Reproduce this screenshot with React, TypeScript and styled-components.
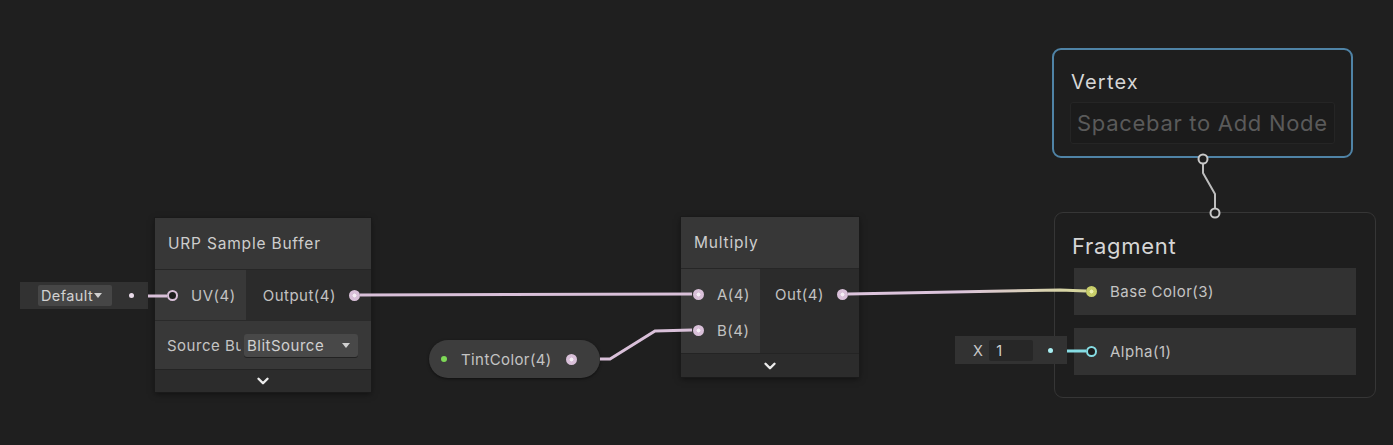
import React from "react";
import styled, { createGlobalStyle } from "styled-components";
import { ChevronDown } from "lucide-react";

const GlobalStyle = createGlobalStyle`
  html, body { margin: 0; padding: 0; background: #1f1f1f; }
  * { box-sizing: border-box; }
`;

const Canvas = styled.div`
  position: relative;
  width: 1393px;
  height: 445px;
  overflow: hidden;
  background: #1f1f1f;
  font-family: Inter, "Noto Sans", sans-serif;
  color: #c4c4c4;
`;

const WireLayer = styled.svg`
  position: absolute;
  left: 0;
  top: 0;
  width: 1393px;
  height: 445px;
  pointer-events: none;
  z-index: 2;
`;

const Placed = styled.div<{ $x: number; $y: number; $w: number }>`
  position: absolute;
  left: ${(p) => p.$x}px;
  top: ${(p) => p.$y}px;
  width: ${(p) => p.$w}px;
`;

const Node = styled(Placed)`
  display: flex;
  flex-direction: column;
  background: #2b2b2b;
  box-shadow: 0 0 0 1px #1a1a1a, 0 2px 6px rgba(0, 0, 0, 0.5);
`;

const NodeHeader = styled.div`
  height: 52px;
  display: flex;
  align-items: center;
  padding-left: 13px;
  background: #373737;
  border-bottom: 1px solid #262626;
  font-size: 15.5px;
  color: #cdcdcd;
  letter-spacing: 0.8px;
`;

const PortsRow = styled.div<{ $h: number }>`
  display: flex;
  height: ${(p) => p.$h}px;
`;

const InputsCol = styled.div<{ $w: number; $top?: number }>`
  width: ${(p) => p.$w}px;
  background: #383838;
  display: flex;
  flex-direction: column;
  justify-content: ${(p) => (p.$top ? "flex-start" : "center")};
  gap: 12px;
  padding-left: 12px;
  padding-top: ${(p) => p.$top ?? 0}px;
`;

const OutputsCol = styled.div<{ $top?: number }>`
  flex: 1;
  display: flex;
  flex-direction: column;
  justify-content: ${(p) => (p.$top ? "flex-start" : "center")};
  align-items: flex-end;
  padding-right: 11px;
  padding-top: ${(p) => p.$top ?? 0}px;
`;

const PortItem = styled.div<{ $reverse?: boolean }>`
  display: flex;
  flex-direction: ${(p) => (p.$reverse ? "row-reverse" : "row")};
  align-items: center;
  gap: 13px;
  height: 24px;
  font-size: 15px;
  letter-spacing: 0.5px;
  color: #c2c2c2;
  white-space: nowrap;
`;

const Port = styled.span<{ $c: string; $filled?: boolean; $core?: string }>`
  flex: none;
  width: 11px;
  height: 11px;
  border-radius: 50%;
  border: 2px solid ${(p) => p.$c};
  background: ${(p) =>
    p.$filled
      ? `radial-gradient(circle, ${p.$core ?? "#f3e8f3"} 0 1.8px, ${p.$c} 2.2px)`
      : "#1d1d1d"};
`;

const FieldRow = styled.div`
  height: 49px;
  display: flex;
  align-items: center;
  padding-left: 12px;
  gap: 3px;
  background: #383838;
  border-top: 1px solid #2a2a2a;
  font-size: 15px;
  letter-spacing: 0.5px;
  color: #c4c4c4;
  white-space: nowrap;
  overflow: hidden;
`;

const FieldLabel = styled.span<{ $w: number }>`
  width: ${(p) => p.$w}px;
  overflow: hidden;
  flex: none;
`;

const Dropdown = styled.div<{ $w: number }>`
  width: ${(p) => p.$w}px;
  height: 23px;
  display: flex;
  align-items: center;
  justify-content: space-between;
  padding: 0 8px 0 3px;
  background: #484848;
  border-radius: 3px;
  box-shadow: 0 1px 0 #222;
  color: #d0d0d0;
`;

const Caret = styled.span`
  flex: none;
  width: 0;
  height: 0;
  border-left: 4px solid transparent;
  border-right: 4px solid transparent;
  border-top: 5px solid #d0d0d0;
`;

const CollapseBar = styled.div<{ $h: number }>`
  height: ${(p) => p.$h}px;
  display: flex;
  align-items: center;
  justify-content: center;
  background: #2c2c2c;
  border-top: 1px solid #242424;
  color: #ececec;
`;

const InlineInput = styled(Placed)<{ $h: number }>`
  height: ${(p) => p.$h}px;
  display: flex;
  align-items: center;
  background: #323232;
  padding-left: 18px;
  padding-right: 14px;
  gap: 6px;
  font-size: 14.5px;
  letter-spacing: 0.4px;
  color: #c8c8c8;
`;

const InlineBox = styled.div<{ $w: number }>`
  width: ${(p) => p.$w}px;
  height: 21px;
  display: flex;
  align-items: center;
  padding-left: 3px;
  gap: 1px;
  background: #464646;
  border-radius: 2px;
  color: #d2d2d2;
`;

const DarkBox = styled(InlineBox)`
  background: #272727;
  padding-left: 7px;
`;

const Spacer = styled.div`
  flex: 1;
`;

const Dot = styled.span<{ $c: string }>`
  width: 5px;
  height: 5px;
  border-radius: 50%;
  background: ${(p) => p.$c};
`;

const Pill = styled(Placed)`
  height: 38px;
  border-radius: 19px;
  background: #3d3d3d;
  display: flex;
  align-items: center;
  padding-left: 12px;
  gap: 14px;
  font-size: 15px;
  letter-spacing: 0.4px;
  color: #c4c4c4;
  box-shadow: 0 1px 3px rgba(0, 0, 0, 0.5);
`;

const GreenDot = styled.span`
  width: 6px;
  height: 6px;
  border-radius: 50%;
  background: #7ed957;
`;

const Context = styled(Placed)<{ $h: number; $active?: boolean }>`
  height: ${(p) => p.$h}px;
  display: flex;
  flex-direction: column;
  border-radius: 9px;
  border: ${(p) => (p.$active ? "2px solid #4f83a6" : "1.5px solid #363636")};
  background: #1e1e1e;
  padding: ${(p) => (p.$active ? "16px 16px 0 16px" : "17px 19px 0 19px")};
`;

const ContextTitle = styled.div<{ $size: number; $ls: number; $shift?: number }>`
  font-size: ${(p) => p.$size}px;
  letter-spacing: ${(p) => p.$ls}px;
  margin-left: ${(p) => p.$shift ?? 0}px;
  color: #d6d6d6;
  height: 31px;
  display: flex;
  align-items: center;
`;

const Placeholder = styled.div`
  margin-top: 5px;
  height: 42px;
  display: flex;
  align-items: center;
  padding-left: 6px;
  border: 1px solid #252525;
  border-radius: 3px;
  background: #1b1b1b;
  font-size: 22px;
  color: #5a5a5a;
  letter-spacing: 0.7px;
  white-space: nowrap;
  overflow: hidden;
`;

const BlockRow = styled.div<{ $mt: number }>`
  margin-top: ${(p) => p.$mt}px;
  height: 47px;
  display: flex;
  align-items: center;
  padding-left: 12px;
  gap: 13px;
  background: #323232;
  font-size: 15px;
  letter-spacing: 0.5px;
  color: #c4c4c4;
`;

const PINK = "#d9c0d9";

export default function App() {
  return (
    <Canvas>
      <GlobalStyle />
      <WireLayer viewBox="0 0 1393 445">
        <defs>
          <linearGradient id="baseGrad" x1="960" y1="0" x2="1080" y2="0" gradientUnits="userSpaceOnUse">
            <stop offset="0" stopColor="#dcc4dc" />
            <stop offset="1" stopColor="#d6d69c" />
          </linearGradient>
        </defs>
        <line x1="148" y1="296" x2="167" y2="296" stroke={PINK} strokeWidth="3" />
        <line x1="360" y1="295" x2="692" y2="294" stroke={PINK} strokeWidth="3" />
        <path d="M600 359 L610 359 L655 331 L692 330" fill="none" stroke={PINK} strokeWidth="3" />
        <path d="M848 294 L1060 290 L1086 291" fill="none" stroke="url(#baseGrad)" strokeWidth="3" />
        <line x1="1067" y1="351" x2="1086" y2="351" stroke="#86dde4" strokeWidth="3" />
        <path d="M1203 158 L1203 173 L1215 194 L1215 209" fill="none" stroke="#bdbdbd" strokeWidth="2" />
        <circle cx="1203" cy="159" r="4.5" fill="#1e1e1e" stroke="#c8c8c8" strokeWidth="2" />
        <circle cx="1215" cy="213" r="4.5" fill="#1e1e1e" stroke="#c8c8c8" strokeWidth="2" />
      </WireLayer>

      <InlineInput $x={20} $y={282} $w={128} $h={27}>
        <InlineBox $w={74}>
          Default
          <Caret />
        </InlineBox>
        <Spacer />
        <Dot $c="#eadcea" />
      </InlineInput>

      <Node $x={155} $y={218} $w={216}>
        <NodeHeader>URP Sample Buffer</NodeHeader>
        <PortsRow $h={50}>
          <InputsCol $w={91}>
            <PortItem>
              <Port $c={PINK} />
              UV(4)
            </PortItem>
          </InputsCol>
          <OutputsCol>
            <PortItem $reverse>
              <Port $c={PINK} $filled $core="#f5eef5" />
              Output(4)
            </PortItem>
          </OutputsCol>
        </PortsRow>
        <FieldRow>
          <FieldLabel $w={74}>Source Buffer</FieldLabel>
          <Dropdown $w={114}>
            BlitSource
            <Caret />
          </Dropdown>
        </FieldRow>
        <CollapseBar $h={23}>
          <ChevronDown size={18} strokeWidth={3.2} />
        </CollapseBar>
      </Node>

      <Pill $x={429} $y={340} $w={171}>
        <GreenDot />
        TintColor(4)
        <Port $c={PINK} $filled $core="#f5eef5" />
      </Pill>

      <Node $x={681} $y={217} $w={178}>
        <NodeHeader>Multiply</NodeHeader>
        <PortsRow $h={84}>
          <InputsCol $w={79} $top={13}>
            <PortItem>
              <Port $c={PINK} $filled $core="#f5eef5" />
              A(4)
            </PortItem>
            <PortItem>
              <Port $c={PINK} $filled $core="#f5eef5" />
              B(4)
            </PortItem>
          </InputsCol>
          <OutputsCol $top={13}>
            <PortItem $reverse>
              <Port $c={PINK} $filled $core="#f5eef5" />
              Out(4)
            </PortItem>
          </OutputsCol>
        </PortsRow>
        <CollapseBar $h={24}>
          <ChevronDown size={18} strokeWidth={3.2} />
        </CollapseBar>
      </Node>

      <Context $x={1052} $y={48} $w={301} $h={110} $active>
        <ContextTitle $size={20} $ls={1.2} $shift={1}>Vertex</ContextTitle>
        <Placeholder>Spacebar to Add Node</Placeholder>
      </Context>

      <Context $x={1054} $y={212} $w={322} $h={186}>
        <ContextTitle $size={22} $ls={0.7} $shift={-2}>Fragment</ContextTitle>
        <BlockRow $mt={7}>
          <Port $c="#c9cf6b" $filled $core="#eef2b0" />
          Base Color(3)
        </BlockRow>
        <BlockRow $mt={13}>
          <Port $c="#86dde4" />
          Alpha(1)
        </BlockRow>
      </Context>

      <InlineInput $x={955} $y={336} $w={112} $h={28}>
        X
        <DarkBox $w={44}>1</DarkBox>
        <Spacer />
        <Dot $c="#a8eef2" />
      </InlineInput>
    </Canvas>
  );
}
